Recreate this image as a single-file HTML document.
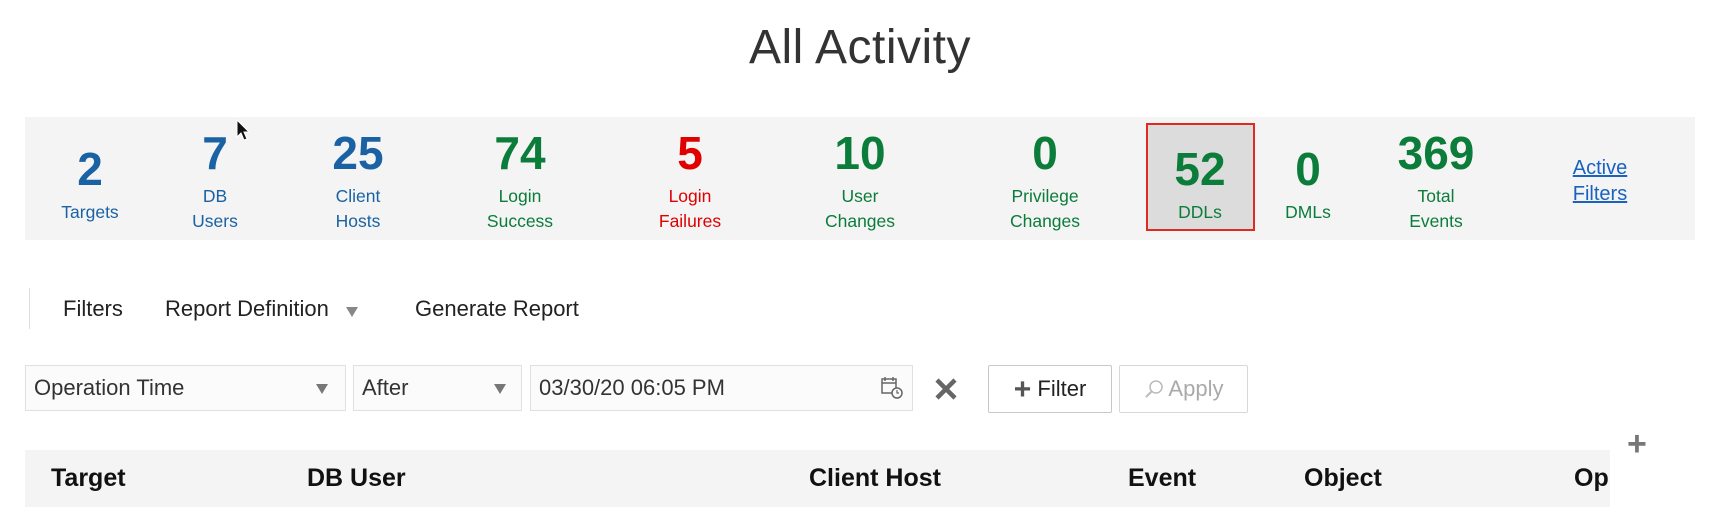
<!DOCTYPE html>
<html><head><meta charset="utf-8"><style>
body{margin:0;width:1720px;height:508px;overflow:hidden;background:#fff;font-family:"Liberation Sans",sans-serif;position:relative}
.a{position:absolute}
h1{position:absolute;top:20px;left:0;width:1720px;text-align:center;margin:0;font-weight:300;font-size:48px;color:#333;letter-spacing:0.5px}
.band{left:25px;top:117px;width:1670px;height:123px;background:#f4f4f4}
.st{position:absolute;text-align:center;width:160px;margin-left:-80px}
.n{font-weight:bold;font-size:46px;line-height:46px}
.l{font-size:17.5px;line-height:25px;margin-top:8px}
.b{color:#1a62a3}.g{color:#0b7c3a}.r{color:#e00000}
.tb{font-size:22px;color:#222;top:296px}
.box{position:absolute;top:365px;height:46px;border:1px solid #e0e0e0;background:#fbfbfb;box-sizing:border-box;font-size:22px;color:#333;line-height:44px;padding-left:8px}
.tri{position:absolute;width:0;height:0;border-left:6px solid transparent;border-right:6px solid transparent;border-top:10px solid #777}
.btn{position:absolute;top:365px;height:48px;border:1px solid #c8c8c8;border-radius:2px;box-sizing:border-box;background:#fff;font-size:22px;line-height:46px;text-align:center}
.th{position:absolute;top:465px;font-weight:bold;font-size:25px;color:#111}
</style></head><body>
<h1>All Activity</h1>
<div class="a band"></div>
<div class="a" style="left:1146px;top:123px;width:109px;height:108px;background:#dcdcdc;border:2px solid #e02a20;box-sizing:border-box"></div>
<div class="st b" style="left:90px;top:146px"><div class="n">2</div><div class="l">Targets</div></div>
<div class="st b" style="left:215px;top:130px"><div class="n">7</div><div class="l">DB<br>Users</div></div>
<div class="st b" style="left:358px;top:130px"><div class="n">25</div><div class="l">Client<br>Hosts</div></div>
<div class="st g" style="left:520px;top:130px"><div class="n">74</div><div class="l">Login<br>Success</div></div>
<div class="st r" style="left:690px;top:130px"><div class="n">5</div><div class="l">Login<br>Failures</div></div>
<div class="st g" style="left:860px;top:130px"><div class="n">10</div><div class="l">User<br>Changes</div></div>
<div class="st g" style="left:1045px;top:130px"><div class="n">0</div><div class="l">Privilege<br>Changes</div></div>
<div class="st g" style="left:1200px;top:146px"><div class="n">52</div><div class="l">DDLs</div></div>
<div class="st g" style="left:1308px;top:146px"><div class="n">0</div><div class="l">DMLs</div></div>
<div class="st g" style="left:1436px;top:130px"><div class="n">369</div><div class="l">Total<br>Events</div></div>
<div class="st b" style="left:1600px;top:155px;font-size:20px;line-height:26px;text-decoration:underline;color:#1a62c0">Active<br>Filters</div>
<svg class="a" style="left:236px;top:119px" width="16" height="24" viewBox="0 0 16 24"><path d="M1 1 L1 18 L5 14 L8 21 L11 20 L8 13 L13 13 Z" fill="#111" stroke="#fff" stroke-width="1"/></svg>
<div class="a" style="left:29px;top:288px;width:1px;height:41px;background:#ddd"></div>
<div class="a tb" style="left:63px">Filters</div>
<div class="a tb" style="left:165px">Report Definition</div>
<div class="tri" style="left:346px;top:307px;border-top-color:#888"></div>
<div class="a tb" style="left:415px">Generate Report</div>
<div class="box" style="left:25px;width:321px">Operation Time</div>
<div class="tri" style="left:316px;top:384px"></div>
<div class="box" style="left:353px;width:169px">After</div>
<div class="tri" style="left:494px;top:384px"></div>
<div class="box" style="left:530px;width:383px">03/30/20 06:05 PM</div>
<svg class="a" style="left:880px;top:376px" width="24" height="24" viewBox="0 0 24 24"><rect x="2" y="3" width="14" height="14" fill="none" stroke="#666" stroke-width="1.5"/><path d="M2 7h14M5 1v4M13 1v4" stroke="#666" stroke-width="1.5"/><circle cx="17" cy="17" r="5" fill="#fbfbfb" stroke="#666" stroke-width="1.5"/><path d="M17 14v3h2" stroke="#666" stroke-width="1.2" fill="none"/></svg>
<svg class="a" style="left:934px;top:377px" width="24" height="24" viewBox="0 0 24 24"><path d="M3 3L21 21M21 3L3 21" stroke="#666" stroke-width="4.5"/></svg>
<div class="btn" style="left:988px;width:124px;color:#222"><span style="font-weight:bold;font-size:30px;color:#555;vertical-align:-3px">+</span> Filter</div>
<div class="btn" style="left:1119px;width:129px;color:#aaa;border-color:#d8d8d8"><svg width="20" height="20" viewBox="0 0 20 20" style="vertical-align:-3px"><circle cx="12" cy="8" r="6" fill="none" stroke="#bbb" stroke-width="1.5"/><path d="M8 12L2 18" stroke="#bbb" stroke-width="2"/></svg> Apply</div>
<div class="a" style="left:25px;top:450px;width:1585px;height:57px;background:#f4f4f4;overflow:hidden">
<div class="th" style="left:26px;top:14px">Target</div>
<div class="th" style="left:282px;top:14px">DB User</div>
<div class="th" style="left:784px;top:14px">Client Host</div>
<div class="th" style="left:1103px;top:14px">Event</div>
<div class="th" style="left:1279px;top:14px">Object</div>
<div class="th" style="left:1549px;top:14px">Op</div>
</div>
<div class="a" style="left:1627px;top:425px;font-size:34px;font-weight:bold;color:#777">+</div>
</body></html>
